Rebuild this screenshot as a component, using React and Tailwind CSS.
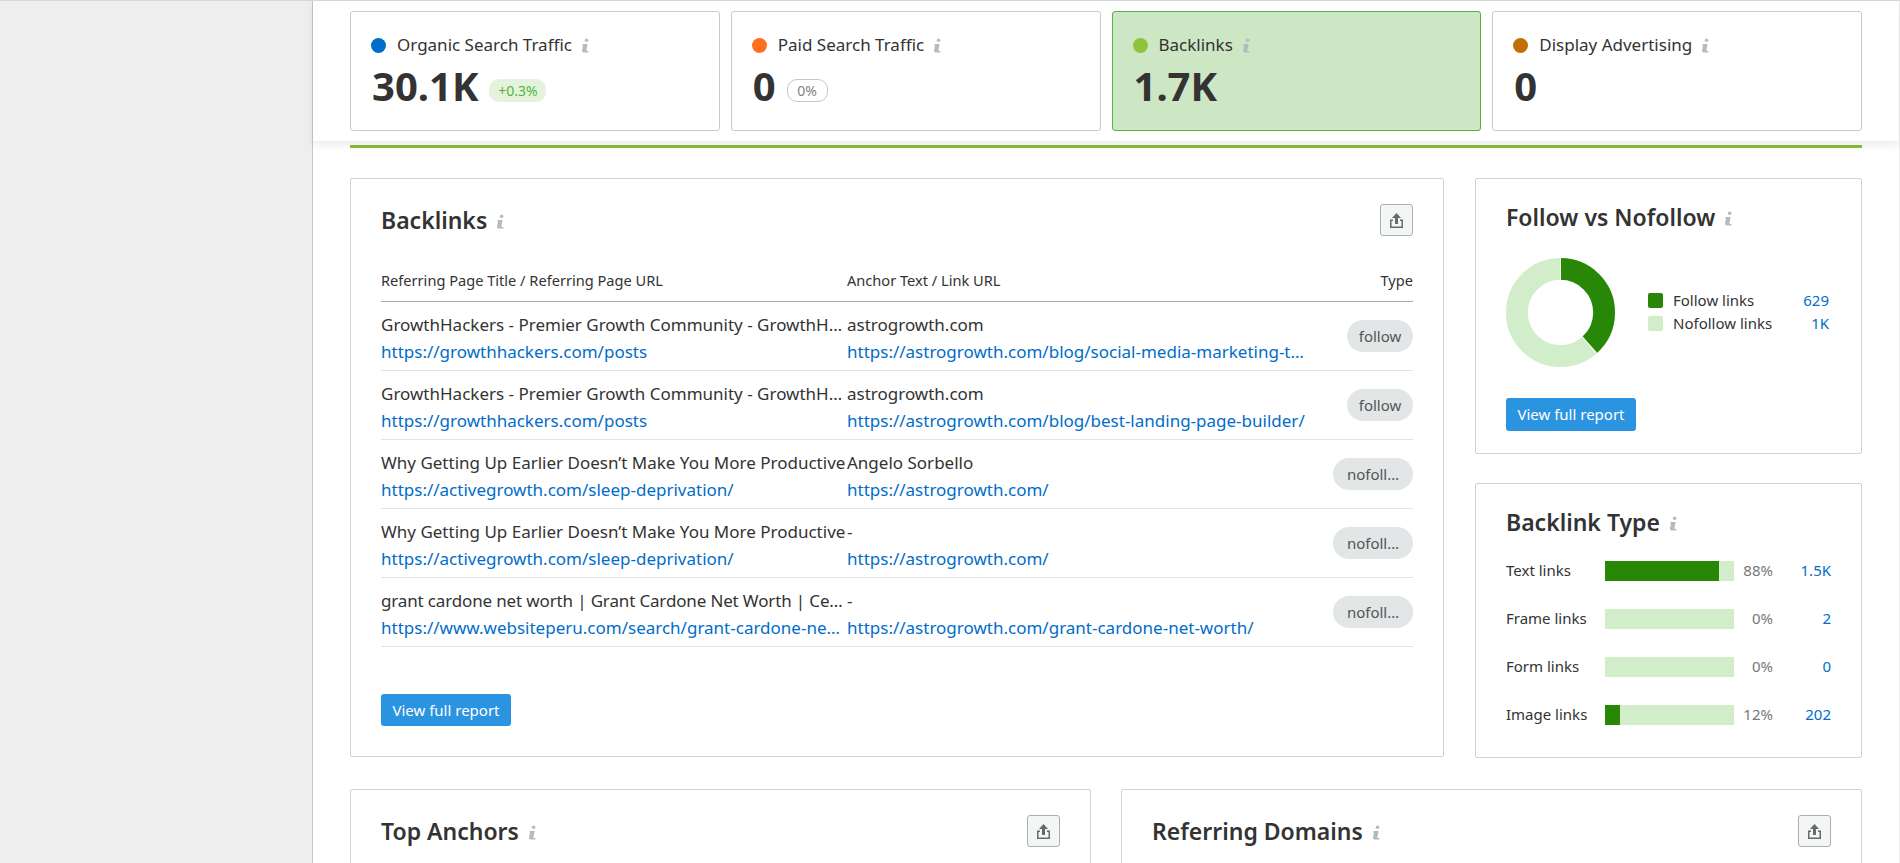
const metrics = [
  { label: 'Organic Search Traffic', value: '30.1K', dot: 'bg-[#006dca]', badge: '+0.3%', badgeClass: 'bg-[#e3f3de] text-[#57b33a] w-[57px]' },
  { label: 'Paid Search Traffic', value: '0', dot: 'bg-[#ff6f1e]', badge: '0%', badgeClass: 'bg-white border border-[#c4c7c7] text-[#808585] w-[41px]' },
  { label: 'Backlinks', value: '1.7K', dot: 'bg-[#8fc43a]', active: true },
  { label: 'Display Advertising', value: '0', dot: 'bg-[#c27006]' },
]

const backlinks = [
  { title: 'GrowthHackers - Premier Growth Community - GrowthH…', url: 'https://growthhackers.com/posts', anchor: 'astrogrowth.com', link: 'https://astrogrowth.com/blog/social-media-marketing-t…', type: 'follow' },
  { title: 'GrowthHackers - Premier Growth Community - GrowthH…', url: 'https://growthhackers.com/posts', anchor: 'astrogrowth.com', link: 'https://astrogrowth.com/blog/best-landing-page-builder/', type: 'follow' },
  { title: 'Why Getting Up Earlier Doesn’t Make You More Productive', url: 'https://activegrowth.com/sleep-deprivation/', anchor: 'Angelo Sorbello', link: 'https://astrogrowth.com/', type: 'nofoll…' },
  { title: 'Why Getting Up Earlier Doesn’t Make You More Productive', url: 'https://activegrowth.com/sleep-deprivation/', anchor: '-', link: 'https://astrogrowth.com/', type: 'nofoll…' },
  { title: 'grant cardone net worth | Grant Cardone Net Worth | Ce…', tight: true, url: 'https://www.websiteperu.com/search/grant-cardone-ne…', anchor: '-', link: 'https://astrogrowth.com/grant-cardone-net-worth/', type: 'nofoll…' },
]

const linkTypes = [
  { label: 'Text links', pct: 88, value: '1.5K' },
  { label: 'Frame links', pct: 0, value: '2' },
  { label: 'Form links', pct: 0, value: '0' },
  { label: 'Image links', pct: 12, value: '202' },
]

function InfoIcon({ className = '' }) {
  return (
    <svg className={`inline-block w-[9px] h-[15px] ${className}`} viewBox="0 0 9 15" fill="#b4bbbb">
      <circle cx="5.6" cy="2.2" r="1.8" />
      <path d="M1.6 6h5l-1.2 6.2c-.1.5.1.7.6.7h1.6l-.4 1.6H2.8c-1.3 0-1.9-.7-1.7-1.9l.9-5H1.3z" />
    </svg>
  )
}

function ExportButton() {
  return (
    <button className="w-[33px] h-[32px] flex items-center justify-center rounded-[3px] border border-[#a9b0b0] bg-[#f4f5f5]">
      <svg className="w-[17px] h-[17px]" viewBox="0 0 17 17" fill="#666b6b">
        <path d="M8.5 1 13 6H10v6H7V6H4z" />
        <path d="M2 7.5h3V9H3.5v5.5h10V9H12V7.5h3V16H2z" />
      </svg>
    </button>
  )
}

function ReportButton({ className = '' }) {
  return (
    <button className={`block w-[130px] bg-[#2b94e1] text-white text-[15px] rounded-[3px] ${className}`}>
      View full report
    </button>
  )
}

function MetricCard({ label, value, dot, badge, badgeClass, active }) {
  return (
    <div className={`h-[120px] rounded-[3px] border pl-[20px] pt-[21px] ${active ? 'bg-[#cde6c4] border-[#57b33a]' : 'bg-white border-[#c9cccc]'}`}>
      <div className="flex items-center h-[24px]">
        <span className={`w-[15px] h-[15px] rounded-full ${dot}`} />
        <span className="ml-[11px] text-[17px] text-[#333]">{label}</span>
        <InfoIcon className="ml-[9px]" />
      </div>
      <div className="flex items-end mt-[5px] h-[48px]">
        <span className="ml-[1px] text-[40px] leading-[48px] font-bold text-[#333]">{value}</span>
        {badge && (
          <span className={`ml-[11px] mb-[8px] h-[23px] rounded-[10px] flex items-center justify-center text-[14px] ${badgeClass}`}>
            {badge}
          </span>
        )}
      </div>
    </div>
  )
}

function Panel({ className = '', children }) {
  return <div className={`bg-white rounded-[2px] border border-[#cfd2d2] ${className}`}>{children}</div>
}

function PanelTitle({ children }) {
  return (
    <div className="flex items-center h-[32px]">
      <h2 className="text-[23px] font-semibold text-[#333]">{children}</h2>
      <InfoIcon className="ml-[9px] mt-[2px]" />
    </div>
  )
}

function BacklinksTable() {
  return (
    <Panel className="w-[1094px] h-[579px] px-[30px] pt-[25px]">
      <div className="flex items-center justify-between">
        <PanelTitle>Backlinks</PanelTitle>
        <ExportButton />
      </div>
      <div className="grid grid-cols-[466px_462px_1fr] h-[66px] pt-[32px] border-b border-[#a8adad] text-[14.6px] leading-[24px] text-[#333]">
        <span>Referring Page Title / Referring Page URL</span>
        <span>Anchor Text / Link URL</span>
        <span className="text-right">Type</span>
      </div>
      {backlinks.map((row, i) => (
        <div key={i} className="grid grid-cols-[466px_462px_1fr] h-[69px] pt-[11px] border-b border-[#e0e3e3] text-[17px] leading-[24px] whitespace-nowrap">
          <div>
            <div className={`text-[#333] ${row.tight ? 'tracking-[-0.15px]' : ''}`}>{row.title}</div>
            <div className="mt-[3px] text-[#006dca]">{row.url}</div>
          </div>
          <div>
            <div className="text-[#333]">{row.anchor}</div>
            <div className="mt-[3px] text-[#006dca]">{row.link}</div>
          </div>
          <div className="flex justify-end">
            <span className={`mt-[7px] h-[32px] rounded-full bg-[#e3e6e6] text-[15px] text-center leading-[32px] text-[#555] ${row.type === 'follow' ? 'w-[66px]' : 'w-[80px]'}`}>{row.type}</span>
          </div>
        </div>
      ))}
      <ReportButton className="mt-[47px] h-[32px]" />
    </Panel>
  )
}

function FollowPanel() {
  return (
    <Panel className="h-[276px] px-[30px] pt-[22px]">
      <PanelTitle>Follow vs Nofollow</PanelTitle>
      <div className="flex items-center mt-[25px]">
        <svg className="w-[109px] h-[109px] shrink-0" viewBox="0 0 36 36">
          <circle cx="18" cy="18" r="14.4" fill="none" stroke="#d1edca" strokeWidth="7.2" />
          <circle cx="18" cy="18" r="14.4" fill="none" stroke="#288706" strokeWidth="7.2" strokeDasharray="34.5 56" transform="rotate(-90 18 18)" />
          <path d="M18 0v7.2M23 23.2l6.6 8.2" stroke="#fff" strokeWidth="0.3" />
        </svg>
        <div className="ml-[33px] w-[181px] text-[15px] leading-[23px] text-[#333] -mt-[1px]">
          <div className="flex items-center">
            <span className="w-[15px] h-[15px] rounded-[2px] bg-[#288706]" />
            <span className="ml-[10px] flex-1">Follow links</span>
            <span className="text-[#006dca]">629</span>
          </div>
          <div className="flex items-center">
            <span className="w-[15px] h-[15px] rounded-[2px] bg-[#d1edca]" />
            <span className="ml-[10px] flex-1">Nofollow links</span>
            <span className="text-[#006dca]">1K</span>
          </div>
        </div>
      </div>
      <ReportButton className="mt-[31px] h-[33px]" />
    </Panel>
  )
}

function LinkTypePanel() {
  return (
    <Panel className="h-[275px] px-[30px] pt-[22px]">
      <PanelTitle>Backlink Type</PanelTitle>
      <div className="mt-[23px] flex flex-col gap-[28px]">
        {linkTypes.map((t) => (
          <div key={t.label} className="flex items-start h-[20px] text-[15px] leading-[18px]">
            <span className="w-[99px] text-[#333]">{t.label}</span>
            <span className="w-[129px] h-[20px] bg-[#d1edca]">
              <span className="block h-full bg-[#288706]" style={{ width: `${t.pct}%` }} />
            </span>
            <span className="w-[39px] text-right text-[#757a7a]">{t.pct}%</span>
            <span className="flex-1 text-right text-[#006dca]">{t.value}</span>
          </div>
        ))}
      </div>
    </Panel>
  )
}

function BottomPanel({ title }) {
  return (
    <Panel className="flex-1 h-[120px] px-[30px] pt-[25px] rounded-b-none">
      <div className="flex items-center justify-between">
        <PanelTitle>{title}</PanelTitle>
        <ExportButton />
      </div>
    </Panel>
  )
}

export default function App() {
  return (
    <div className="h-[863px] overflow-hidden flex bg-white border-t border-[#d5d8db] font-['Noto_Sans',sans-serif]">
      <aside className="w-[312px] shrink-0 bg-[#eeeeee]" />
      <main className="flex-1 min-w-0 border-l border-r border-l-[#c4c7c7] border-r-[#ececec]">
        <header className="h-[140px] pt-[10px] px-[37px] bg-white shadow-[0_4px_8px_rgba(0,0,0,0.08)] relative">
          <div className="grid grid-cols-4 gap-[11px]">
            {metrics.map((m) => (
              <MetricCard key={m.label} {...m} />
            ))}
          </div>
        </header>
        <div className="px-[37px]">
          <div className="mt-[4px] h-[3px] bg-[#8abb35]" />
          <div className="mt-[30px] flex gap-[31px]">
            <BacklinksTable />
            <div className="flex-1 flex flex-col gap-[29px]">
              <FollowPanel />
              <LinkTypePanel />
            </div>
          </div>
          <div className="mt-[31px] flex gap-[30px]">
            <BottomPanel title="Top Anchors" />
            <BottomPanel title="Referring Domains" />
          </div>
        </div>
      </main>
    </div>
  )
}
